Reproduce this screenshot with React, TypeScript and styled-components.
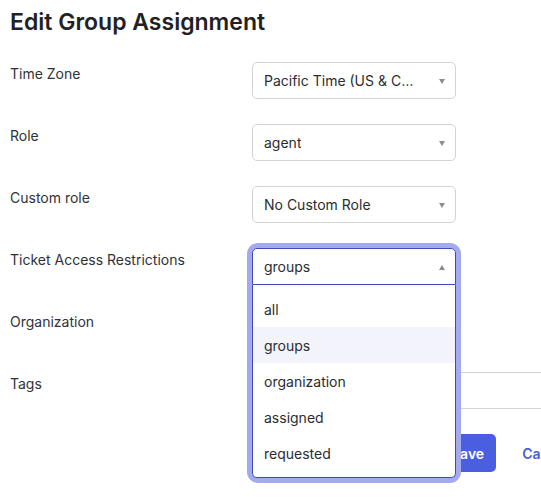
import React from "react";
import styled, { createGlobalStyle } from "styled-components";

const GlobalStyle = createGlobalStyle`
  html, body {
    margin: 0;
    padding: 0;
    background: #fff;
  }
  body {
    font-family: Inter, "Noto Sans", "Liberation Sans", sans-serif;
    color: #2f3237;
    overflow: hidden;
  }
`;

const Page = styled.div`
  width: 541px;
  height: 497px;
  padding: 8px 0 0 10px;
  box-sizing: border-box;
  overflow: hidden;
`;

const Title = styled.h1`
  margin: 0 0 26px;
  font-size: 23px;
  line-height: 28px;
  font-weight: 600;
  color: #1f2124;
`;

const Form = styled.div`
  display: flex;
  flex-direction: column;
  gap: 25px;
`;

const Row = styled.div`
  display: grid;
  grid-template-columns: 242px auto;
  align-items: start;
  position: relative;
`;

const Label = styled.div`
  font-size: 14px;
  line-height: 20px;
  padding-top: 2px;
  color: #2f3237;
`;

const SelectBox = styled.div<{ $open?: boolean }>`
  width: 204px;
  height: 37px;
  box-sizing: border-box;
  border: 1px solid ${(p) => (p.$open ? "#3d4bb8" : "#d3d3d3")};
  border-radius: ${(p) => (p.$open ? "5px 5px 0 0" : "5px")};
  display: flex;
  align-items: center;
  padding: 0 36px 0 11px;
  position: relative;
  font-size: 14px;
  color: #2a2c30;
  background: #fff;
`;

const Value = styled.span`
  white-space: nowrap;
  overflow: hidden;
  text-overflow: ellipsis;
`;

const Caret = styled.span<{ $up?: boolean }>`
  position: absolute;
  right: 10px;
  top: 50%;
  margin-top: -2px;
  width: 0;
  height: 0;
  border-left: 3.5px solid transparent;
  border-right: 3.5px solid transparent;
  ${(p) =>
    p.$up
      ? "border-bottom: 5px solid #8c8c8c;"
      : "border-top: 5px solid #8c8c8c;"}
`;

const Input = styled.div<{ $width: number }>`
  width: ${(p) => p.$width}px;
  height: 37px;
  box-sizing: border-box;
  border: 1px solid #d3d3d3;
  border-radius: 5px;
  background: #fff;
`;

const Combo = styled.div`
  position: absolute;
  left: 242px;
  top: 0;
  width: 204px;
  border-radius: 6px;
  box-shadow: 0 0 0 5px #a3aaf0;
  background: #fff;
  z-index: 5;
`;

const Menu = styled.ul`
  list-style: none;
  margin: 0;
  padding: 6px 0;
  border: 1px solid #3d4bb8;
  border-top: none;
  border-radius: 0 0 5px 5px;
  background: #fff;
`;

const Option = styled.li<{ $active?: boolean }>`
  height: 36px;
  display: flex;
  align-items: center;
  padding-left: 11px;
  font-size: 14px;
  color: #2a2c30;
  background: ${(p) => (p.$active ? "#f3f3fc" : "transparent")};
`;

const Actions = styled.div`
  display: flex;
  align-items: center;
  gap: 26px;
  padding-left: 429px;
`;

const SaveButton = styled.button`
  height: 38px;
  padding: 0 12px;
  border: none;
  border-radius: 5px;
  background: #4a5ee0;
  color: #fff;
  font-family: inherit;
  font-size: 14px;
  font-weight: 600;
`;

const CancelLink = styled.a`
  color: #4a5ee0;
  font-size: 14px;
  font-weight: 600;
  text-decoration: none;
  white-space: nowrap;
`;

const accessOptions = ["all", "groups", "organization", "assigned", "requested"];

export default function App() {
  return (
    <Page>
      <GlobalStyle />
      <Title>Edit Group Assignment</Title>
      <Form>
        <Row>
          <Label>Time Zone</Label>
          <SelectBox>
            <Value>Pacific Time (US &amp; Canada)</Value>
            <Caret />
          </SelectBox>
        </Row>
        <Row>
          <Label>Role</Label>
          <SelectBox>
            <Value>agent</Value>
            <Caret />
          </SelectBox>
        </Row>
        <Row>
          <Label>Custom role</Label>
          <SelectBox>
            <Value>No Custom Role</Value>
            <Caret />
          </SelectBox>
        </Row>
        <Row>
          <Label>Ticket Access Restrictions</Label>
          <div style={{ height: 37 }} />
          <Combo>
            <SelectBox $open>
              <Value>groups</Value>
              <Caret $up />
            </SelectBox>
            <Menu>
              {accessOptions.map((o) => (
                <Option key={o} $active={o === "groups"}>
                  {o}
                </Option>
              ))}
            </Menu>
          </Combo>
        </Row>
        <Row>
          <Label>Organization</Label>
          <Input $width={204} />
        </Row>
        <Row>
          <Label>Tags</Label>
          <Input $width={330} />
        </Row>
        <Actions>
          <SaveButton>Save</SaveButton>
          <CancelLink href="#">Cancel</CancelLink>
        </Actions>
      </Form>
    </Page>
  );
}
